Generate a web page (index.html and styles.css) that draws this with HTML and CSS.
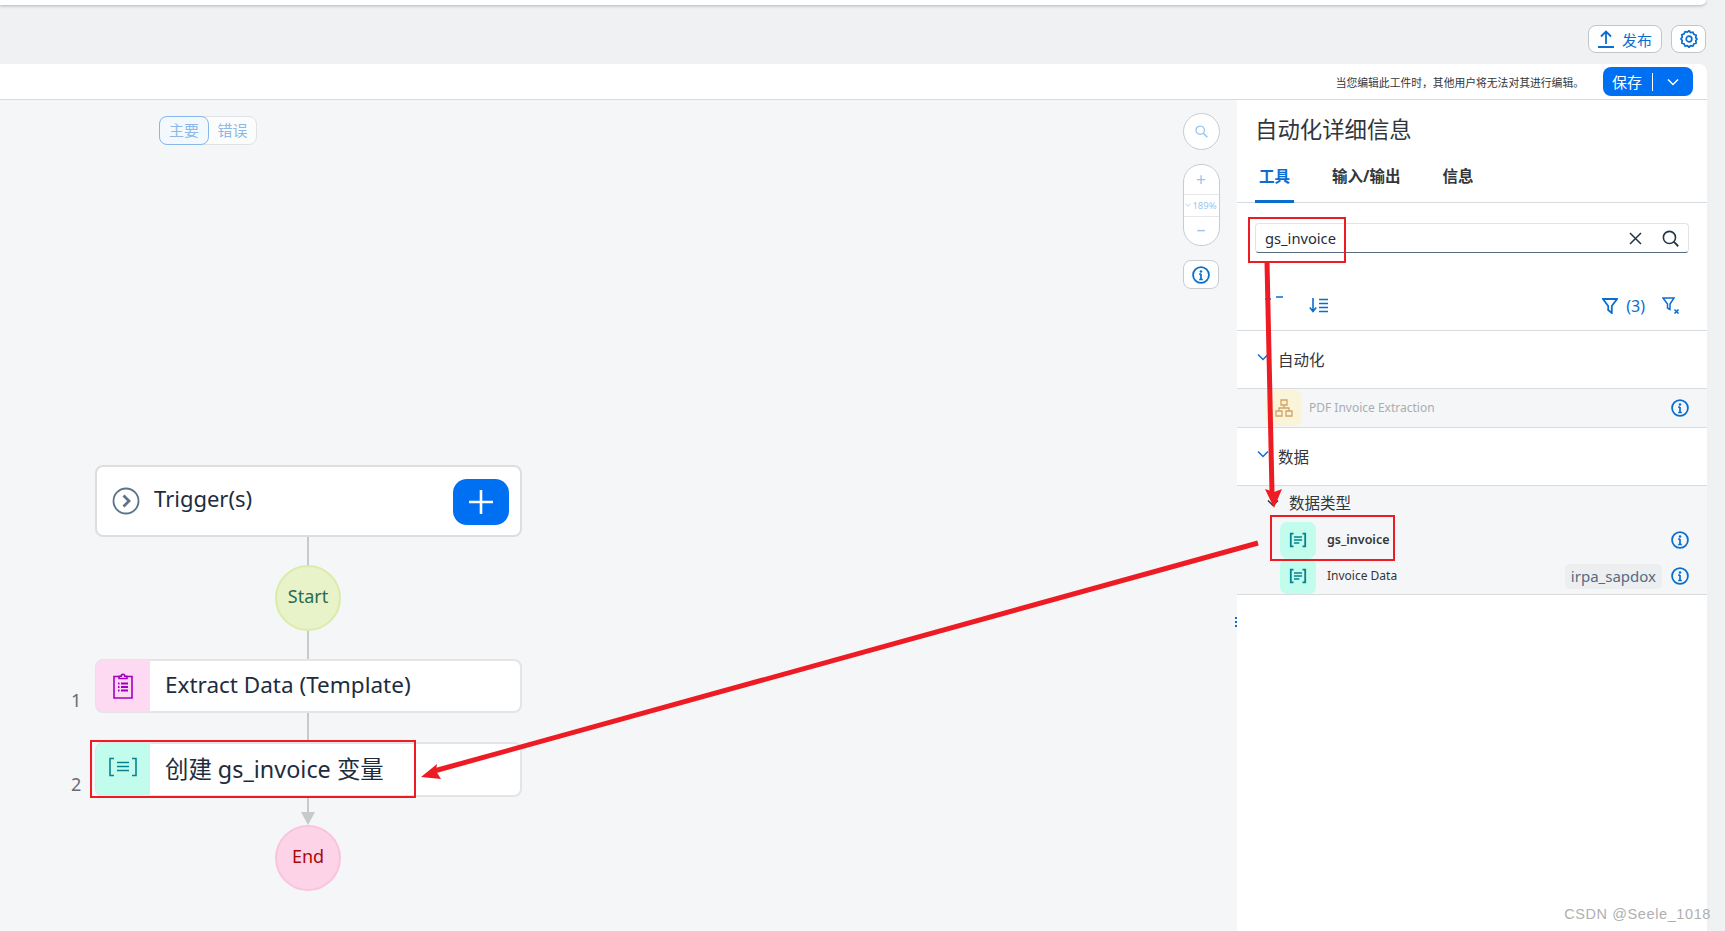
FILE: index.html
```html
<!DOCTYPE html>
<html lang="zh-CN">
<head>
  <meta charset="UTF-8">
  <meta name="viewport" content="width=device-width, initial-scale=1.0">
  <title>自动化详细信息</title>
  <link rel="stylesheet" href="styles.css">
</head>
<body>

  <svg class="defs" width="0" height="0">
    <symbol id="i-info" viewBox="0 0 20 20">
      <circle cx="10" cy="10" r="8.800" fill="none" stroke="currentColor" stroke-width="2"/>
      <circle cx="10" cy="6" r="1.400" fill="currentColor"/>
      <path d="M10 9v6M8 9h2M8 15h4" fill="none" stroke="currentColor" stroke-width="1.900"/>
    </symbol>
    <symbol id="i-var" viewBox="0 0 20 20">
      <path d="M5 2H2v16h3M15 2h3v16h-3" fill="none" stroke="currentColor" stroke-width="2"/>
      <path d="M5.500 6.200h9M5.500 10h9M5.500 13.800h6" fill="none" stroke="currentColor" stroke-width="2"/>
    </symbol>
    <symbol id="i-chev" viewBox="0 0 12 8">
      <path d="M1 1.500l5 5 5-5" fill="none" stroke="currentColor" stroke-width="1.500"/>
    </symbol>
  </svg>

  <div class="topbar"></div>

  <div class="actions">
    <button class="btn-outline btn-publish">
      <svg width="16" height="18" viewBox="0 0 16 18"><path d="M8 14V2M3 6.500L8 1.500l5 5M0 17h16" fill="none" stroke="#0a6ed1" stroke-width="1.800"/></svg>
      发布
    </button>
    <button class="btn-outline btn-gear">
      <svg width="18" height="18" viewBox="0 0 18 18"><path d="M9 1.200l1.500 1.900 2.400-.4 1 2.200 2.300.9-.5 2.400L17 9.500l-1.300 1.800.5 2.300-2.300.9-1 2.200-2.400-.4L9 18l-1.500-1.700-2.400.4-1-2.200-2.300-.9.500-2.300L1 9.500l1.300-1.800-.5-2.400 2.300-.9 1-2.200 2.400.4z" transform="translate(0 -.6)" fill="none" stroke="#0a6ed1" stroke-width="1.700"/><circle cx="9" cy="9" r="2.800" fill="none" stroke="#0a6ed1" stroke-width="1.700"/></svg>
    </button>
  </div>

  <div class="savebar">
    <span class="save-note">当您编辑此工件时，其他用户将无法对其进行编辑。</span>
    <div class="btn-save">
      <span class="save-label">保存</span>
      <span class="save-arrow"><svg width="12" height="8"><use href="#i-chev"/></svg></span>
    </div>
  </div>

  <div class="main">

    <div class="canvas">
      <div class="seg">
        <span class="seg-item active">主要</span>
        <span class="seg-item">错误</span>
      </div>

      <div class="flow">
        <div class="node node-trigger">
          <svg class="trigger-icon" width="28" height="28" viewBox="0 0 28 28"><circle cx="14" cy="14" r="12.500" fill="none" stroke="#5b738b" stroke-width="1.800"/><path d="M11.500 8.500l5.500 5.500-5.500 5.500" fill="none" stroke="#5b738b" stroke-width="2.800"/></svg>
          <span class="trigger-text">Trigger(s)</span>
          <span class="btn-add">
            <svg width="24" height="24" viewBox="0 0 24 24"><path d="M12 0v24M0 12h24" stroke="#fff" stroke-width="2.600"/></svg>
          </span>
        </div>
        <div class="line line-a"></div>
        <div class="circle circle-start">Start</div>
        <div class="line line-b"></div>
        <div class="node node-step node-first">
          <span class="step-no">1</span>
          <span class="tile tile-pink">
            <svg width="20" height="26" viewBox="0 0 20 26"><path d="M6 3.500H1v21.500h18V3.500H14M6 5.500V3.200h2.200a1.800 1.800 0 0 1 3.600 0H14v2.300z" fill="none" stroke="#a100c2" stroke-width="1.600"/><path d="M5 10.500h1.500M8 10.500h7M5 14h1.500M8 14h7M5 17.500h1.500M8 17.500h7" stroke="#a100c2" stroke-width="1.800"/></svg>
          </span>
          <span class="step-text">Extract Data (Template)</span>
        </div>
        <div class="line line-d"></div>
        <div class="node node-step">
          <span class="step-no">2</span>
          <span class="tile tile-teal">
            <svg class="tile-var" width="28" height="22" viewBox="0 0 28 22"><path d="M5 1.500H1v17h4M23 1.500h4v17h-4" fill="none" stroke="#07838f" stroke-width="1.600"/><path d="M8 5.500h12M8 9.500h12M8 13.500h12" stroke="#07838f" stroke-width="1.600"/></svg>
          </span>
          <span class="step-text step-cjk">创建 gs_invoice 变量</span>
        </div>
        <div class="line line-c"></div>
        <div class="arrow-down"></div>
        <div class="circle circle-end">End</div>
      </div>

      <div class="tools">
        <div class="tool-round">
          <svg width="13" height="13" viewBox="0 0 13 13"><circle cx="5.200" cy="5.200" r="4.200" fill="none" stroke="#8fc0f3" stroke-width="1.200"/><path d="M8.300 8.300l4 4" stroke="#8fc0f3" stroke-width="1.400"/></svg>
        </div>
        <div class="tool-zoom">
          <span class="zoom-btn zoom-plus">+</span>
          <span class="zoom-val"><svg width="6" height="4"><use href="#i-chev"/></svg>189%</span>
          <span class="zoom-btn zoom-minus">–</span>
        </div>
        <div class="tool-info"><svg width="18" height="18"><use href="#i-info"/></svg></div>
      </div>
      <div class="handle"></div>
    </div>

    <aside class="panel">
      <h2 class="panel-title">自动化详细信息</h2>
      <div class="tabs">
        <span class="tab active">工具</span>
        <span class="tab">输入/输出</span>
        <span class="tab">信息</span>
      </div>

      <div class="search">
        <span class="search-text">gs_invoice</span>
        <svg width="13" height="13" viewBox="0 0 13 13"><path d="M1 1l11 11M12 1L1 12" stroke="#223548" stroke-width="1.500"/></svg>
        <svg width="17" height="17" viewBox="0 0 16 16"><circle cx="7" cy="7" r="5.700" fill="none" stroke="#223548" stroke-width="1.500"/><path d="M11 11l4.300 4.300" stroke="#223548" stroke-width="1.700"/></svg>
      </div>

      <div class="tree-tools">
        <svg class="tt-collapse" width="18" height="6" viewBox="0 0 18 6"><path d="M0 3h6M11 1h7" stroke="#0a6ed1" stroke-width="1.500"/></svg>
        <svg class="tt-sort" width="19" height="15" viewBox="0 0 19 15"><path d="M4 0v13M.8 9.500L4 13.500l3.200-4M10 1.500h9M10 5.500h9M10 9.500h9M10 13.500h9" fill="none" stroke="#0a6ed1" stroke-width="1.600"/></svg>
        <span class="tt-right">
          <svg width="16" height="16" viewBox="0 0 16 16"><path d="M1 1h14L9.800 8v7l-3.600-3V8z" fill="none" stroke="#0a6ed1" stroke-width="1.800"/></svg>
          <span class="tt-count">(3)</span>
          <svg class="tt-clear" width="18" height="18" viewBox="0 0 18 18"><path d="M1 1h11L8 7v5.500L5.500 11V7z" fill="none" stroke="#0a6ed1" stroke-width="1.500"/><path d="M12.500 12.500l4 4M16.500 12.500l-4 4" stroke="#0a6ed1" stroke-width="1.600"/></svg>
        </span>
      </div>

      <div class="section">
        <svg class="sec-chev" width="12" height="8"><use href="#i-chev"/></svg>
        <span class="sec-name">自动化</span>
      </div>
      <div class="row row-auto">
        <span class="row-tile tile-yellow">
          <svg width="18" height="18" viewBox="0 0 18 18"><path d="M6 1h6v5H6zM1 12h6v5H1zM11 12h6v5h-6zM9 6v3M4 12V9h10v3" fill="none" stroke="#d4a265" stroke-width="1.300"/></svg>
        </span>
        <span class="row-name muted">PDF Invoice Extraction</span>
        <svg class="row-info" width="18" height="18"><use href="#i-info"/></svg>
      </div>

      <div class="section section-data">
        <svg class="sec-chev" width="12" height="8"><use href="#i-chev"/></svg>
        <span class="sec-name">数据</span>
      </div>
      <div class="group">
        <div class="group-head">
          <svg width="12" height="8"><use href="#i-chev"/></svg>
          <span>数据类型</span>
        </div>
        <div class="row row-var">
          <span class="row-tile tile-teal">
            <svg width="18" height="16" viewBox="0 0 20 20" preserveAspectRatio="none"><use href="#i-var"/></svg>
          </span>
          <span class="row-name strong">gs_invoice</span>
          <svg class="row-info" width="18" height="18"><use href="#i-info"/></svg>
        </div>
        <div class="row row-var">
          <span class="row-tile tile-teal">
            <svg width="18" height="16" viewBox="0 0 20 20" preserveAspectRatio="none"><use href="#i-var"/></svg>
          </span>
          <span class="row-name">Invoice Data</span>
          <span class="chip">irpa_sapdox</span>
          <svg class="row-info chip-info" width="18" height="18"><use href="#i-info"/></svg>
        </div>
      </div>
    </aside>
  </div>

  <svg class="marks" width="1725" height="931" viewBox="0 0 1725 931">
    <g fill="none" stroke="#ed1c24" stroke-width="2">
      <rect x="1249" y="218" width="96" height="44"/>
      <rect x="1271" y="516" width="123" height="44"/>
      <rect x="91" y="741" width="324" height="56"/>
    </g>
    <path d="M1267 262L1272 492" stroke="#ed1c24" stroke-width="5" fill="none"/>
    <path d="M1274 508L1265 489L1274 492L1282 489Z" fill="#ed1c24"/>
    <path d="M1258 543L434 771" stroke="#ed1c24" stroke-width="5" fill="none"/>
    <path d="M421 777L437 764L436 771L441 779Z" fill="#ed1c24"/>
  </svg>

  <div class="watermark">CSDN @Seele_1018</div>

</body>
</html>
```

FILE: styles.css
```css
* {
  box-sizing: border-box;
}
body {
  margin: 0;
  width: 1725px;
  height: 931px;
  overflow: hidden;
  position: relative;
  background-color: #eff1f3;
  color: #1d2d3e;
  font-family: "Noto Sans", "Noto Sans CJK SC", sans-serif;
}
.defs {
  position: absolute;
}
.topbar {
  height: 5px;
  margin-right: 19px;
  background-color: #fff;
  border-radius: 0 0 8px 0;
  box-shadow: 0 1px 3px rgba(60, 70, 80, 0.35);
}
.actions {
  height: 59px;
  padding: 20px 19px 0 0;
  display: flex;
  justify-content: flex-end;
  gap: 9px;
}
.btn-outline {
  height: 28px;
  padding: 0;
  display: flex;
  align-items: center;
  justify-content: center;
  background-color: #fff;
  border: 1px solid #bfc6cd;
  border-radius: 8px;
  color: #0a6ed1;
  font-family: inherit;
  font-size: 15px;
}
.btn-publish {
  width: 74px;
  gap: 8px;
}
.btn-gear {
  width: 35px;
}
.savebar {
  height: 36px;
  margin-right: 18px;
  padding-right: 14px;
  display: flex;
  align-items: center;
  justify-content: flex-end;
  background-color: #fff;
  border-bottom: 1px solid #d9dcdf;
  border-radius: 0 8px 0 0;
}
.save-note {
  margin-right: 19px;
  font-size: 10.800px;
  color: #32363a;
}
.btn-save {
  width: 90px;
  height: 29px;
  display: flex;
  align-items: center;
  background-color: #0070f2;
  border-radius: 8px;
  color: #fff;
  font-size: 15px;
}
.save-label {
  width: 50px;
  padding-left: 9px;
  border-right: 1px solid #fff;
  line-height: 18px;
}
.save-arrow {
  flex: 1;
  display: flex;
  justify-content: center;
}
.main {
  height: 831px;
  margin-right: 18px;
  display: flex;
}
.canvas {
  width: 1237px;
  position: relative;
  background-color: #f5f6f7;
}
.seg {
  margin: 16px 0 0 159px;
  width: 98px;
  height: 29px;
  display: flex;
  background-color: #fbfcfc;
  border: 1px solid #dfe3e7;
  border-radius: 8px;
  font-size: 15px;
  color: #8db8e8;
}
.seg-item {
  flex: 1;
  text-align: center;
  line-height: 27px;
}
.seg-item.active {
  margin: -1px 0 -1px -1px;
  flex: 0 0 50px;
  border: 1px solid #86b8ee;
  border-radius: 8px;
  background-color: #f3f8fd;
}
.flow {
  margin: 320px 0 0 95px;
  width: 426px;
  display: flex;
  flex-direction: column;
  align-items: center;
}
.node {
  width: 427px;
  flex: none;
  align-self: flex-start;
  display: flex;
  align-items: center;
  position: relative;
  background-color: #fff;
  border: 2px solid #e2e4e6;
  border-radius: 8px;
}
.node-trigger {
  height: 72px;
  padding: 0 11px 0 15px;
  border-color: #dcdee0;
}
.trigger-text {
  margin: -7px 0 0 14px;
  flex: 1;
  font-size: 22px;
  line-height: 30px;
}
.btn-add {
  width: 56px;
  height: 46px;
  margin-top: 2px;
  display: flex;
  align-items: center;
  justify-content: center;
  background-color: #0070f2;
  border-radius: 14px;
}
.line {
  width: 2px;
  background-color: #c8c9ca;
}
.line-a {
  height: 28px;
}
.line-b {
  height: 28px;
}
.line-d {
  height: 29px;
}
.line-c {
  height: 15px;
}
.arrow-down {
  width: 0;
  height: 0;
  border-left: 7px solid transparent;
  border-right: 7px solid transparent;
  border-top: 13px solid #c8c9ca;
}
.circle {
  width: 66px;
  height: 66px;
  padding-bottom: 4px;
  display: flex;
  align-items: center;
  justify-content: center;
  border-radius: 50%;
  font-size: 18px;
}
.circle-start {
  background-color: #e8f3c9;
  border: 2px solid #dcebaa;
  color: #2c6b4f;
}
.circle-end {
  background-color: #fdd3e8;
  border: 2px solid #fbc3dd;
  color: #aa0808;
}
.node-step {
  height: 55px;
}
.node-first {
  height: 54px;
}
.step-no {
  position: absolute;
  left: -26px;
  bottom: -1px;
  font-size: 18px;
  color: #6a6d70;
}
.tile {
  width: 54px;
  align-self: stretch;
  margin: -1px 0 -1px -1px;
  display: flex;
  align-items: center;
  justify-content: center;
  border-radius: 7px 0 0 7px;
}
.tile-pink {
  background-color: #fdd9f2;
}
.tile-teal {
  background-color: #c2fced;
}
.tile-var {
  margin-top: -4px;
}
.step-text {
  margin: -4px 0 0 15px;
  font-size: 22.500px;
}
.step-cjk {
  font-size: 23.400px;
}
.tools {
  position: absolute;
  top: 13px;
  left: 1183px;
  width: 36px;
  display: flex;
  flex-direction: column;
  align-items: center;
}
.tool-round {
  width: 37px;
  height: 37px;
  display: flex;
  align-items: center;
  justify-content: center;
  background-color: #fff;
  border: 1px solid #c8ccd1;
  border-radius: 50%;
}
.tool-zoom {
  margin-top: 14px;
  width: 37px;
  height: 82px;
  display: flex;
  flex-direction: column;
  background-color: #fff;
  border: 1px solid #c8ccd1;
  border-radius: 18px;
  color: #9cc6f2;
}
.zoom-btn {
  flex: 1;
  text-align: center;
  font-size: 18px;
  line-height: 28px;
}
.zoom-minus {
  line-height: 24px;
}
.zoom-val {
  height: 23px;
  display: flex;
  align-items: center;
  justify-content: center;
  gap: 1px;
  border-top: 1px solid #e5e7e9;
  border-bottom: 1px solid #e5e7e9;
  font-size: 9.500px;
}
.tool-info {
  margin-top: 14px;
  width: 36px;
  height: 29px;
  display: flex;
  align-items: center;
  justify-content: center;
  background-color: #fff;
  border: 1px solid #c8ccd1;
  border-radius: 8px;
  color: #0a6ed1;
}
.handle {
  position: absolute;
  left: 1235px;
  top: 516px;
  width: 2px;
  height: 11px;
  background-image: radial-gradient(circle, #0a6ed1 1px, transparent 1px);
  background-size: 2px 4px;
}
.panel {
  flex: 1;
  background-color: #fff;
}
.panel-title {
  margin: 0;
  padding: 15px 0 0 18px;
  height: 59px;
  font-size: 22.400px;
  font-weight: 400;
  line-height: 30px;
  color: #32363a;
}
.tabs {
  height: 44px;
  padding-left: 18px;
  display: flex;
  gap: 34px;
  border-bottom: 1px solid #d9dcdf;
}
.tab {
  height: 44px;
  padding: 3px 4px 0;
  font-size: 15.500px;
  font-weight: 700;
  line-height: 28px;
  color: #32363a;
}
.tab.active {
  color: #0a6ed1;
  border-bottom: 3px solid #0a6ed1;
}
.search {
  margin: 20px 18px 0;
  width: 434px;
  height: 30px;
  padding: 0 9px 0 9px;
  display: flex;
  align-items: center;
  gap: 20px;
  background-color: #fff;
  border: 1px solid #e1e4e7;
  border-bottom: 1px solid #556b82;
  border-radius: 4px;
  font-size: 14.700px;
}
.search-text {
  flex: 1;
}
.tree-tools {
  height: 78px;
  padding: 28px 27px 0 28px;
  display: flex;
  align-items: center;
  border-bottom: 1px solid #d9dcdf;
}
.tt-collapse {
  margin-top: -14px;
}
.tt-sort {
  margin-left: 26px;
}
.tt-right {
  margin-left: auto;
  display: flex;
  align-items: center;
  gap: 8px;
  color: #0a6ed1;
  font-size: 16px;
}
.tt-clear {
  margin-left: 9px;
}
.section {
  height: 58px;
  padding: 0 0 0 20px;
  display: flex;
  align-items: center;
  gap: 9px;
  border-bottom: 1px solid #d9dcdf;
  color: #0a6ed1;
}
.sec-chev {
  margin-top: -6px;
}
.sec-name {
  font-size: 15.500px;
  color: #32363a;
}
.row {
  display: flex;
  align-items: center;
  background-color: #f5f6f7;
}
.row-auto {
  height: 39px;
  padding: 0 18px 0 29px;
  border-bottom: 1px solid #d9dcdf;
}
.row-tile {
  width: 36px;
  height: 36px;
  display: flex;
  align-items: center;
  justify-content: center;
  border-radius: 7px;
  color: #07838f;
}
.tile-yellow {
  background-color: #faf4d8;
}
.row-name {
  flex: 1;
  margin-left: 7px;
  padding-bottom: 2px;
  font-size: 12px;
  color: #32363a;
}
.row-name.muted {
  color: #a9adb1;
}
.row-name.strong {
  font-size: 12.500px;
  font-weight: 600;
}
.row-var .row-name {
  margin-left: 11px;
}
.row-info {
  flex: none;
  color: #0a6ed1;
}
.section-data {
  height: 58px;
}
.group {
  height: 109px;
  background-color: #f5f6f7;
  border-bottom: 1px solid #d9dcdf;
}
.group-head {
  height: 36px;
  padding: 0 0 3px 30px;
  display: flex;
  align-items: center;
  gap: 10px;
  font-size: 15.500px;
  color: #32363a;
}
.row-var {
  height: 36px;
  padding: 0 18px 0 43px;
}
.chip {
  margin-right: 9px;
  padding: 0 6px;
  height: 25px;
  background-color: #eceef0;
  border-radius: 5px;
  font-size: 15px;
  line-height: 24px;
  color: #556b82;
}
.marks {
  position: absolute;
  top: 0;
  left: 0;
  pointer-events: none;
}
.watermark {
  position: absolute;
  right: 14px;
  bottom: 9px;
  font-family: "Liberation Sans", sans-serif;
  font-size: 14.500px;
  color: #b0b0b0;
  letter-spacing: 0.6px;
}
```
